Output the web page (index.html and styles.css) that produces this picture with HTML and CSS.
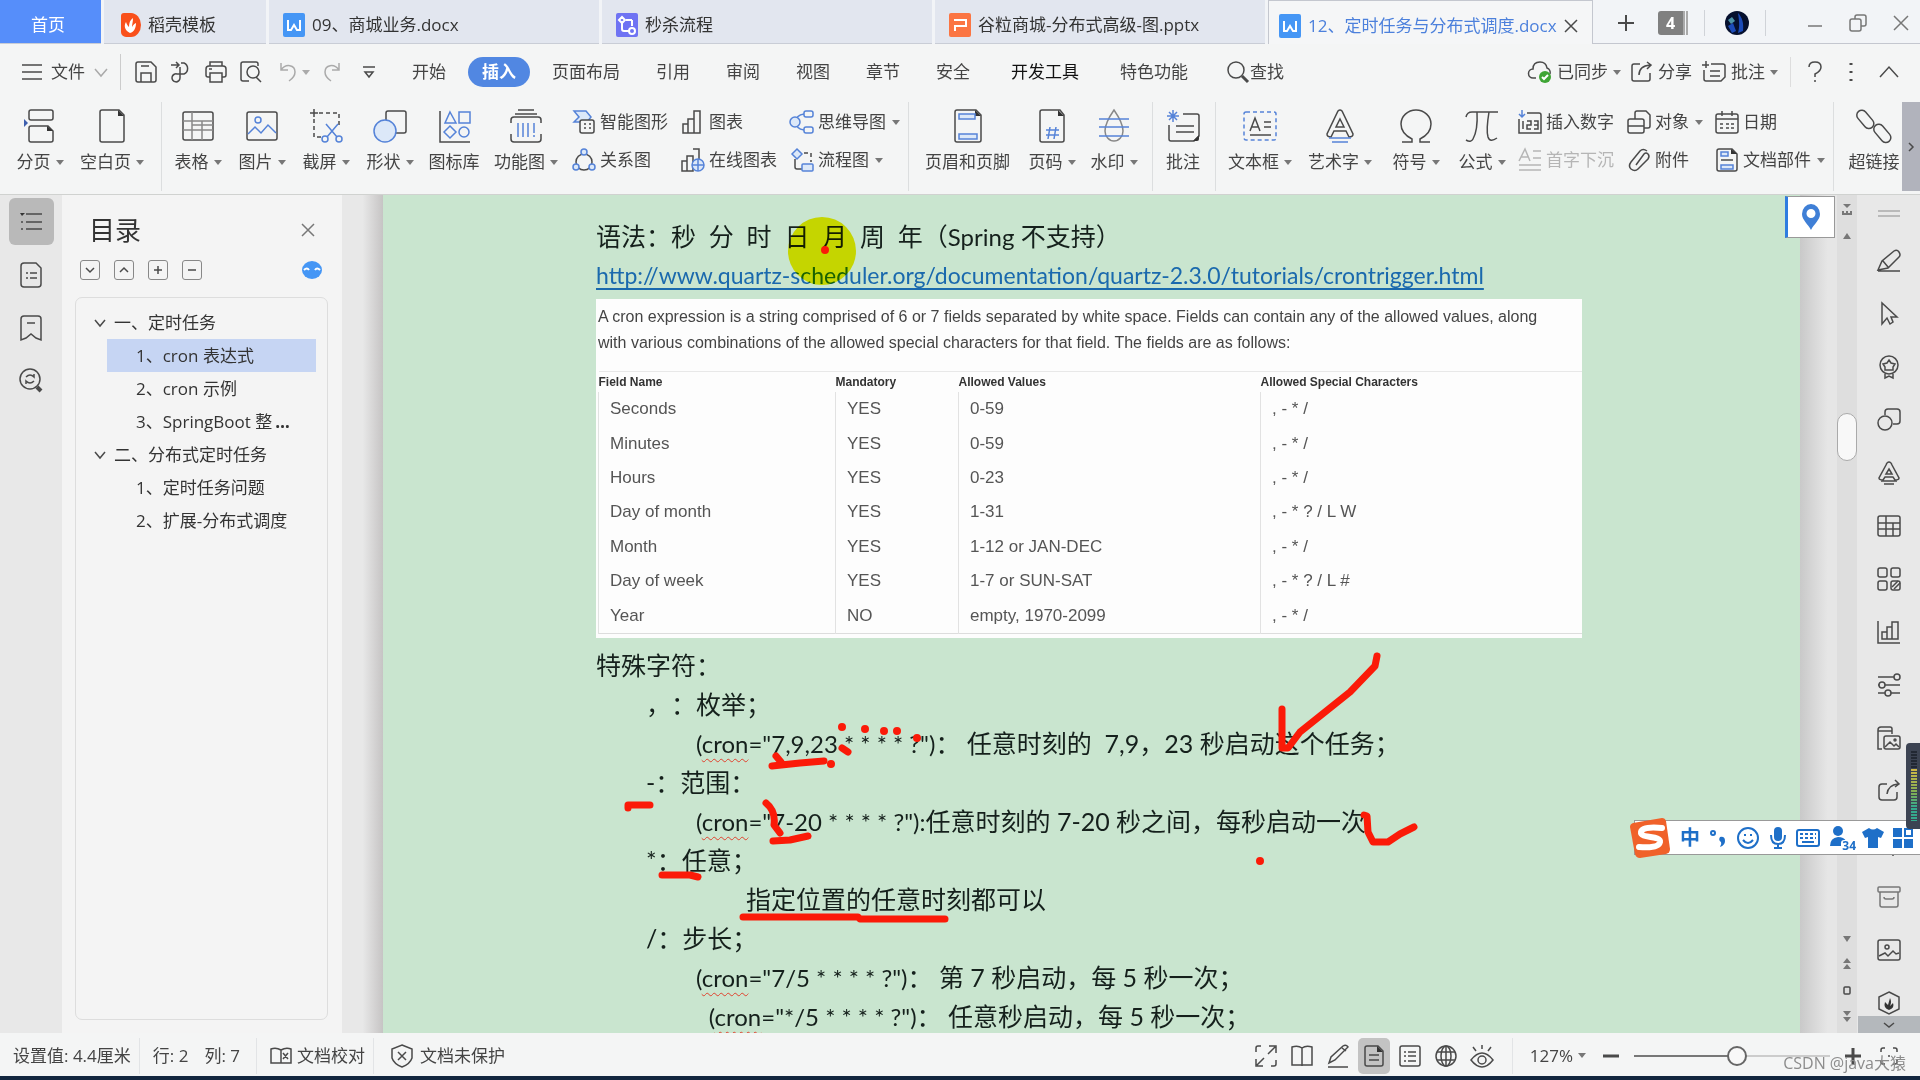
FILE: index.html
```html
<!DOCTYPE html>
<html lang="zh-CN">
<head>
    <meta charset="UTF-8">
    <meta name="viewport" content="width=device-width, initial-scale=1.0">
    <title>12、定时任务与分布式调度.docx</title>
    <link rel="stylesheet" href="styles.css">
</head>
<body>
    <!-- Document tabs -->
    <header class="tabs">
        <button class="tab tab-home">首页</button>
        <button class="tab tab-docer">
            <svg width="20" height="24" viewBox="0 0 20 24"><path class="f-orange" d="M3 0h7a10 12 0 0 1 0 24H5a5 5 0 0 1-5-5V3a3 3 0 0 1 3-3z"/><path class="f-white" d="M9 20C3 17 3 12 5 9c1 3 2 4 3 5 0-4 1-7 4-9 0 4-1 6-1 9 1-2 2-3 4-4 0 5-2 9-6 10z"/></svg>
            稻壳模板
        </button>
        <button class="tab tab-file">
            <svg width="22" height="24" viewBox="0 0 22 24"><rect class="f-blue" width="22" height="24" rx="2"/><path class="s-white" d="M5 7v10h3l3-5 3 5h3V7"/></svg>
            09、商城业务.docx
        </button>
        <button class="tab tab-file">
            <svg width="22" height="24" viewBox="0 0 22 24"><rect class="f-violet" width="22" height="24" rx="2"/><path class="s-white" d="M6 4l3 3-3 3-3-3zM6 10v6q0 2 2 2h5M10 7h6M16 7v6"/><circle class="s-white" cx="16" cy="18" r="3"/></svg>
            秒杀流程
        </button>
        <button class="tab tab-file">
            <svg width="22" height="24" viewBox="0 0 22 24"><rect class="f-coral" width="22" height="24" rx="2"/><path class="s-white" d="M5 7h12v6H6v5"/></svg>
            谷粒商城-分布式高级-图.pptx
        </button>
        <div class="tab tab-active">
            <svg width="22" height="24" viewBox="0 0 22 24"><rect class="f-blue" width="22" height="24" rx="2"/><path class="s-white" d="M5 7v10h3l3-5 3 5h3V7"/></svg>
            <span>12、定时任务与分布式调度.docx</span>
            <button class="plain" aria-label="关闭标签"><svg width="14" height="14" viewBox="0 0 14 14"><path d="M1 1l12 12M13 1L1 13"/></svg></button>
        </div>
        <div class="window-bar">
            <button class="plain" aria-label="新建"><svg width="18" height="18" viewBox="0 0 18 18"><path class="s-bold" d="M9 1v16M1 9h16"/></svg></button>
            <button class="tab-count">4</button>
            <span class="bar-line"></span>
            <button class="plain avatar" aria-label="账号"><svg width="24" height="24" viewBox="0 0 24 24"><circle class="f-navy" cx="12" cy="12" r="12"/><path class="f-royal" d="M13 2c4 4 6 10 5 18l-5 2c2-7 1-13 0-20zM3 15l5-3 3 8-4 2z"/><path class="f-teal" d="M3 9l4-3 3 4-4 3z"/></svg></button>
            <span class="bar-line"></span>
            <div class="window-buttons">
                <button class="plain" aria-label="最小化"><svg width="16" height="16" viewBox="0 0 16 16"><path d="M1 11h14"/></svg></button>
                <button class="plain" aria-label="还原"><svg width="18" height="18" viewBox="0 0 18 18"><rect x="1" y="5" width="11" height="12" rx="2"/><path d="M6 5V3q0-2 2-2h7q2 0 2 2v7q0 2-2 2h-3"/></svg></button>
                <button class="plain" aria-label="关闭"><svg width="16" height="16" viewBox="0 0 16 16"><path d="M1 1l14 14M15 1L1 15"/></svg></button>
            </div>
        </div>
    </header>

    <!-- Menu -->
    <nav class="menu">
        <button class="file-menu">
            <svg width="20" height="16" viewBox="0 0 20 16"><path d="M0 1h20M0 8h20M0 15h20"/></svg>
            文件
            <svg class="light" width="14" height="9" viewBox="0 0 14 9"><path d="M1 1l6 7 6-7"/></svg>
        </button>
        <div class="quick">
            <button class="plain" aria-label="保存"><svg width="22" height="22" viewBox="0 0 22 22"><path d="M1 3q0-2 2-2h13l5 5v13q0 2-2 2H3q-2 0-2-2zM6 21v-9h10v9M6 5h8"/></svg></button>
            <button class="plain" aria-label="输出为PDF"><svg width="22" height="22" viewBox="0 0 22 22"><path d="M1 4h8M6 1l3 3-3 3M11 2h3a6 6 0 0 1 0 11H7a4 4 0 1 0 3 4V6"/></svg></button>
            <button class="plain" aria-label="打印"><svg width="22" height="22" viewBox="0 0 22 22"><path d="M5 5V1h12v4M5 16H3q-2 0-2-2V8q0-3 3-3h14q3 0 3 3v6q0 2-2 2h-2M5 12h12v9H5zM4 8h3"/></svg></button>
            <button class="plain" aria-label="打印预览"><svg width="22" height="22" viewBox="0 0 22 22"><path d="M9 20H3q-2 0-2-2V3q0-2 2-2h13q2 0 2 2v2M16 16l5 5"/><circle cx="13" cy="11" r="6"/></svg></button>
            <button class="plain light undo" aria-label="撤销"><svg width="18" height="20" viewBox="0 0 18 20"><path d="M2 1v7h7M2 8C7 1 16 3 16 10q0 5-6 9"/></svg><i class="caret"></i></button>
            <button class="plain light" aria-label="恢复"><svg width="18" height="20" viewBox="0 0 18 20"><path d="M16 1v7H9M16 8C11 1 2 3 2 10q0 5 6 9"/></svg></button>
            <button class="plain customize" aria-label="自定义"><svg width="12" height="14" viewBox="0 0 12 14"><path d="M0 2h12M2 7l4 5 4-5z"/></svg></button>
        </div>
        <div class="menu-tabs">
            <button>开始</button>
            <button class="current">插入</button>
            <button>页面布局</button>
            <button>引用</button>
            <button>审阅</button>
            <button>视图</button>
            <button>章节</button>
            <button>安全</button>
            <button class="dark">开发工具</button>
            <button>特色功能</button>
        </div>
        <button class="find"><svg width="22" height="22" viewBox="0 0 22 22"><circle cx="9" cy="9" r="8"/><path class="s-bold" d="M15 15l6 6"/></svg>查找</button>
        <div class="menu-right">
            <button><svg width="24" height="22" viewBox="0 0 24 22"><path d="M8 17H5a4 4 0 0 1 0-9q0-7 7-7 6 0 7 6a5 5 0 0 1 3 6"/><circle class="f-green" cx="17" cy="16" r="6"/><path class="s-white" d="M14 16l2 2 4-4"/></svg>已同步<i class="caret"></i></button>
            <button><svg width="22" height="22" viewBox="0 0 22 22"><path d="M9 3H3q-2 0-2 2v13q0 2 2 2h14q2 0 2-2v-6M8 14q0-9 11-10M16 1l4 3-4 4"/></svg>分享</button>
            <button><svg width="24" height="22" viewBox="0 0 24 22"><path d="M9 3h12q2 0 2 2v11l-4 4H4q-2 0-2-2V9M0 4h7M4 0v7M8 10h10M8 15h10"/></svg>批注<i class="caret"></i></button>
        </div>
        <div class="menu-help">
            <button class="plain" aria-label="帮助"><svg width="16" height="22" viewBox="0 0 16 22"><path d="M2 6q0-5 6-5t6 5q0 4-6 7v3M8 19v2"/></svg></button>
            <button class="plain" aria-label="更多"><svg width="4" height="20" viewBox="0 0 4 20"><path class="s-bold" d="M2 1v2M2 9v2M2 17v2"/></svg></button>
            <button class="plain" aria-label="收起功能区"><svg width="20" height="12" viewBox="0 0 20 12"><path d="M1 11l9-10 9 10"/></svg></button>
        </div>
    </nav>

    <!-- Ribbon -->
    <section class="ribbon">
        <div class="group">
            <button class="tool w72"><svg width="34" height="34" viewBox="0 0 34 34"><rect x="6" y="1" width="24" height="10" rx="2"/><path d="M25 17H8q-2 0-2 2v12q0 2 2 2h20q2 0 2-2v-9z"/><path class="f-dark" d="M24 17v5h6z"/><path class="f-ink" d="M1 10l4 4-4 4z"/></svg><span>分页<i class="caret"></i></span></button>
            <button class="tool w72"><svg width="34" height="34" viewBox="0 0 34 34"><path d="M24 1H7q-2 0-2 2v28q0 2 2 2h20q2 0 2-2V6z"/><path class="f-dark" d="M23 1v6h6z"/></svg><span>空白页<i class="caret"></i></span></button>
        </div>
        <div class="group">
            <button class="tool w64"><svg width="34" height="34" viewBox="0 0 34 34"><rect x="2" y="3" width="30" height="28" rx="2"/><path class="thin" d="M2 12h30M2 21h30M11 3v28M21 12v19M11 16h21"/></svg><span>表格<i class="caret"></i></span></button>
            <button class="tool w64"><svg width="34" height="34" viewBox="0 0 34 34"><rect x="2" y="3" width="30" height="28" rx="2"/><path class="s-blue" d="M3 25l7-7 6 6 7-8 8 8"/><circle class="s-blue" cx="13" cy="11" r="3"/></svg><span>图片<i class="caret"></i></span></button>
            <button class="tool w64"><svg width="34" height="34" viewBox="0 0 34 34"><path d="M1 4h8M5 0v8"/><path class="dash" d="M10 4h20v14M5 10v18h8"/><path class="s-blue" d="M17 15l11 13M29 15L18 28"/><circle class="s-blue" cx="16" cy="30" r="3"/><circle class="s-blue" cx="30" cy="30" r="3"/></svg><span>截屏<i class="caret"></i></span></button>
            <button class="tool w64"><svg width="34" height="34" viewBox="0 0 34 34"><rect x="13" y="2" width="20" height="22" rx="2"/><ellipse class="s-blue f-pale" cx="12" cy="22" rx="11" ry="11"/></svg><span>形状<i class="caret"></i></span></button>
            <button class="tool w64"><svg width="34" height="34" viewBox="0 0 34 34"><path d="M3 2v31h30"/><path class="s-blue" d="M13 3l6 11H8zM22 3h11v11H22zM13 17l6 6-6 6-6-6z"/><circle class="s-blue" cx="27" cy="23" r="5"/></svg><span>图标库</span></button>
            <button class="tool w80"><svg width="34" height="34" viewBox="0 0 34 34"><path d="M9 1h16M6 5h22M2 14v-3q0-3 3-3h24q3 0 3 3v3M2 25v5q0 3 3 3h24q3 0 3-3v-5"/><path class="s-blue" d="M9 14v14M14 14v14M19 14v14M25 14v10M25 26v2"/></svg><span>功能图<i class="caret"></i></span></button>
            <div class="stack w109">
                <button><svg width="24" height="24" viewBox="0 0 24 24"><path class="s-blue f-pale" d="M2 1h12l5 6-4 5H2l5-5z"/><rect class="f-bg" x="8" y="10" width="14" height="13" rx="2"/><path d="M12 14h2M17 14h2M12 18h2M17 18h2"/></svg>智能图形</button>
                <button><svg width="24" height="24" viewBox="0 0 24 24"><circle cx="12" cy="14" r="8"/><circle class="s-blue f-pale" cx="12" cy="4" r="3"/><circle class="s-blue f-pale" cx="4" cy="19" r="3"/><circle class="s-blue f-pale" cx="20" cy="19" r="3"/></svg>关系图</button>
            </div>
            <div class="stack w109">
                <button><svg width="24" height="24" viewBox="0 0 24 24"><path d="M2 14h5v9H2zM7 9h6v14H7zM13 1h6v22h-6z"/></svg>图表</button>
                <button><svg width="24" height="24" viewBox="0 0 24 24"><path d="M1 13h5v10H1zM6 8h6v15H6zM12 1h6v10"/><circle class="s-blue f-pale" cx="17" cy="17" r="6"/><path class="s-blue" d="M11 17h12M17 11v12"/></svg>在线图表</button>
            </div>
            <div class="stack w118">
                <button><svg width="24" height="24" viewBox="0 0 24 24"><path class="s-blue" d="M14 4q-8 1-8 8t8 8"/><circle class="s-blue f-pale" cx="5" cy="12" r="5"/><rect class="s-blue" x="14" y="1" width="9" height="6" rx="2"/><rect class="s-blue" x="14" y="17" width="9" height="6" rx="2"/></svg>思维导图<i class="caret"></i></button>
                <button><svg width="24" height="24" viewBox="0 0 24 24"><path class="s-blue f-pale" d="M7 1l5 5-5 5-5-5z"/><path d="M5 11v8q0 2 2 2h5"/><path class="dash" d="M14 5h7v9"/><rect class="s-blue f-pale" x="12" y="16" width="11" height="7" rx="1"/></svg>流程图<i class="caret"></i></button>
            </div>
        </div>
        <div class="group">
            <button class="tool w109"><svg width="34" height="34" viewBox="0 0 34 34"><path d="M25 1H6q-2 0-2 2v28q0 2 2 2h22q2 0 2-2V6z"/><path class="f-dark" d="M24 1v6h6z"/><path class="s-blue f-pale" d="M8 5h16v5H8zM8 25h18v5H8z"/></svg><span>页眉和页脚</span></button>
            <button class="tool w60"><svg width="34" height="34" viewBox="0 0 34 34"><path d="M25 1H7q-2 0-2 2v28q0 2 2 2h20q2 0 2-2V6z"/><path class="f-dark" d="M23 1v6h6z"/><path class="s-blue" d="M11 21h13M11 26h13M15 18l-2 12M21 18l-2 12"/></svg><span>页码<i class="caret"></i></span></button>
            <button class="tool w64"><svg width="34" height="34" viewBox="0 0 34 34"><path class="thin" d="M17 1Q8 14 8 22a9 10 0 0 0 18 0q0-8-9-21z"/><path class="s-blue" d="M2 10h30M2 18h30M2 27h30"/></svg><span>水印<i class="caret"></i></span></button>
        </div>
        <div class="group">
            <button class="tool w52"><svg width="34" height="34" viewBox="0 0 34 34"><path d="M17 5h14q2 0 2 2v20l-5 5H5q-2 0-2-2V16M10 17h18M10 23h18"/><path class="f-dark" d="M33 26v4q0 2-2 2h-4z"/><path class="s-blue" d="M7 1v12M1 7h12M3 3l8 8M11 3l-8 8"/></svg><span>批注</span></button>
        </div>
        <div class="group">
            <button class="tool w80"><svg width="34" height="34" viewBox="0 0 34 34"><rect class="s-blue dash" x="1" y="3" width="32" height="28" rx="2"/><path d="M7 22l5-13 5 13M9 18h6M21 13h7M21 18h7M7 26h21"/></svg><span>文本框<i class="caret"></i></span></button>
            <button class="tool w80"><svg width="34" height="34" viewBox="0 0 34 34"><path d="M15 2q2-2 4 0l11 23q0 3-4 3l-3-6H11l-3 6q-4 0-4-3z"/><path d="M17 10l4 8h-8z"/><path class="s-blue" d="M6 29h22M9 33h16"/></svg><span>艺术字<i class="caret"></i></span></button>
            <button class="tool w72"><svg width="34" height="34" viewBox="0 0 34 34"><path d="M3 33h10v-3C5 26 2 21 2 15a15 14 0 0 1 30 0c0 6-3 11-11 15v3h10"/></svg><span>符号<i class="caret"></i></span></button>
            <button class="tool w60"><svg width="34" height="34" viewBox="0 0 34 34"><path d="M1 8q1-5 6-5h26M12 3q1 18-4 27-2 4-7 1M24 3q-3 18-1 25 2 6 9 1"/></svg><span>公式<i class="caret"></i></span></button>
            <div class="stack w109">
                <button><svg width="24" height="24" viewBox="0 0 24 24"><path d="M9 3h12q2 0 2 2v18H1V9M5 11v8M9 11h4v4H9v4h4M16 11h4v8h-4M16 15h4"/><path class="s-blue" d="M4 0v7M1 4l3 3 3-3"/></svg>插入数字</button>
                <button class="off" disabled><svg width="24" height="24" viewBox="0 0 24 24"><path d="M1 13L7 1l5 12M3 9h7M15 3h8M15 10h8M1 17h22M1 22h22"/></svg>首字下沉</button>
            </div>
            <div class="stack w88">
                <button><svg width="24" height="24" viewBox="0 0 24 24"><path d="M8 9V3q0-2 2-2h9l4 4v11q0 2-2 2h-4"/><rect x="1" y="9" width="16" height="14" rx="2"/><path d="M1 16h16"/></svg>对象<i class="caret"></i></button>
                <button><svg width="24" height="24" viewBox="0 0 24 24"><path d="M9 17l8-11q2-2 4 0t0 5L11 21q-3 3-7 0-3-3 0-7L13 3q3-3 7 0"/></svg>附件</button>
            </div>
            <div class="stack w118">
                <button><svg width="24" height="24" viewBox="0 0 24 24"><rect x="1" y="4" width="22" height="19" rx="2"/><path d="M1 9h22M7 1v5M17 1v5M5 14h3M11 14h3M16 14h3M5 18h3M11 18h3M16 18h3"/></svg>日期</button>
                <button><svg width="24" height="24" viewBox="0 0 24 24"><path d="M17 1H4q-2 0-2 2v18q0 2 2 2h16q2 0 2-2V6z"/><path class="f-dark" d="M16 1v5h6z"/><path class="s-blue f-pale" d="M6 4h7v4H6zM6 17h12v4H6z"/><path d="M6 12h12"/></svg>文档部件<i class="caret"></i></button>
            </div>
        </div>
        <div class="group group-cut">
            <button class="tool w72"><svg width="34" height="34" viewBox="0 0 34 34"><rect x="-2" y="5" width="21" height="10" rx="5" transform="rotate(50 8 10)"/><rect x="15" y="19" width="21" height="10" rx="5" transform="rotate(50 25 24)"/></svg><span>超链接</span></button>
        </div>
        <button class="ribbon-next" aria-label="向右滚动"><svg width="6" height="10" viewBox="0 0 6 10"><path d="M1 1l4 4-4 4"/></svg></button>
    </section>

    <main class="work">
        <aside class="rail-left">
            <button class="on" aria-label="目录"><svg width="24" height="22" viewBox="0 0 24 22"><path d="M7 3h16M2 11h2M7 11h16M2 18h2M7 18h16"/><path class="f-dark" d="M1 2h5L3 5z"/></svg></button>
            <button aria-label="章节"><svg width="22" height="26" viewBox="0 0 22 26"><path d="M16 1H4Q1 1 1 4v18q0 3 3 3h14q3 0 3-3V6zM6 11h2M10 11h7M6 16h2M10 16h7"/></svg></button>
            <button aria-label="书签"><svg width="22" height="26" viewBox="0 0 22 26"><path d="M1 25V4q0-3 3-3h14q3 0 3 3v21l-5-2-5-4-5 4zM7 8h8"/></svg></button>
            <button aria-label="查找和替换"><svg width="24" height="26" viewBox="0 0 24 26"><circle cx="11" cy="11" r="10"/><path d="M7 9q4-4 8 0v-3M15 13q-4 4-8 0v3"/><path class="s-thick" d="M18 19l4 4"/></svg></button>
        </aside>

        <aside class="outline">
            <div class="outline-head">
                <h2>目录</h2>
                <button class="plain" aria-label="关闭目录"><svg width="14" height="14" viewBox="0 0 14 14"><path d="M1 1l12 12M13 1L1 13"/></svg></button>
            </div>
            <div class="outline-tools">
                <button aria-label="展开"><svg width="10" height="6" viewBox="0 0 10 6"><path d="M1 1l4 4 4-4"/></svg></button>
                <button aria-label="收起"><svg width="10" height="6" viewBox="0 0 10 6"><path d="M1 5l4-4 4 4"/></svg></button>
                <button aria-label="增加级别"><svg width="10" height="10" viewBox="0 0 10 10"><path d="M5 1v8M1 5h8"/></svg></button>
                <button aria-label="降低级别"><svg width="10" height="10" viewBox="0 0 10 10"><path d="M1 5h8"/></svg></button>
                <button class="bot" aria-label="智能识别"><svg width="20" height="18" viewBox="0 0 20 18"><ellipse class="f-blue" cx="10" cy="9" rx="10" ry="9"/><path class="s-white" d="M2 9q3-3 5 0M13 9q2-3 5 0"/></svg></button>
            </div>
            <ul class="tree">
                <li><a href="#s1"><svg width="12" height="8" viewBox="0 0 12 8"><path d="M1 1l5 6 5-6"/></svg>一、定时任务</a>
                    <ul>
                        <li><a class="picked" href="#s11">1、cron 表达式</a></li>
                        <li><a href="#s12">2、cron 示例</a></li>
                        <li><a href="#s13">3、SpringBoot 整<b>…</b></a></li>
                    </ul>
                </li>
                <li><a href="#s2"><svg width="12" height="8" viewBox="0 0 12 8"><path d="M1 1l5 6 5-6"/></svg>二、分布式定时任务</a>
                    <ul>
                        <li><a href="#s21">1、定时任务问题</a></li>
                        <li><a href="#s22">2、扩展-分布式调度</a></li>
                    </ul>
                </li>
            </ul>
        </aside>

        <div class="gutter-left"></div>

        <article class="paper" id="s11">
            <p>语法：秒  分  时  日  月  周  年（<span>Spring</span> 不支持）</p>
            <p class="url"><a href="http://www.quartz-scheduler.org/documentation/quartz-2.3.0/tutorials/crontrigger.html">http://www.quartz-scheduler.org/documentation/quartz-2.3.0/tutorials/crontrigger.html</a></p>
            <div class="figure">
                <p>A cron expression is a string comprised of 6 or 7 fields separated by white space. Fields can contain any of the allowed values, along<br>with various combinations of the allowed special characters for that field. The fields are as follows:</p>
                <table>
                    <thead>
                        <tr><th class="c1">Field Name</th><th class="c2">Mandatory</th><th class="c3">Allowed Values</th><th>Allowed Special Characters</th></tr>
                    </thead>
                    <tbody>
                        <tr><td>Seconds</td><td>YES</td><td>0-59</td><td>, - * /</td></tr>
                        <tr><td>Minutes</td><td>YES</td><td>0-59</td><td>, - * /</td></tr>
                        <tr><td>Hours</td><td>YES</td><td>0-23</td><td>, - * /</td></tr>
                        <tr><td>Day of month</td><td>YES</td><td>1-31</td><td>, - * ? / L W</td></tr>
                        <tr><td>Month</td><td>YES</td><td>1-12 or JAN-DEC</td><td>, - * /</td></tr>
                        <tr><td>Day of week</td><td>YES</td><td>1-7 or SUN-SAT</td><td>, - * ? / L #</td></tr>
                        <tr><td>Year</td><td>NO</td><td>empty, 1970-2099</td><td>, - * /</td></tr>
                    </tbody>
                </table>
            </div>
            <p>特殊字符：</p>
            <p class="in2">，：枚举；</p>
            <p class="in4"><code>(<u>cron</u>="7,9,23 * * * * ?")</code>： 任意时刻的  7,9，23 秒启动这个任务；</p>
            <p class="in2">-：范围：</p>
            <p class="in4"><code>(<u>cron</u>="7-20 * * * * ?"):</code>任意时刻的 7-20 秒之间，每秒启动一次</p>
            <p class="in2">*：任意；</p>
            <p class="in6">指定位置的任意时刻都可以</p>
            <p class="in2">/：步长；</p>
            <p class="in4"><code>(<u>cron</u>="7/5 * * * * ?")</code>： 第 7 秒启动，每 5 秒一次；</p>
            <p class="in4">  <code>(<u>cron</u>="*/5 * * * * ?")</code>： 任意秒启动，每 5 秒一次；</p>

            <!-- Mouse highlight and pen marks drawn over the text -->
            <span class="spot"></span>
            <svg class="ink" width="1417" height="838" viewBox="383 195 1417 838">
                <path class="dots" d="M825 250h0M842 727h0M865 729h0M884 731h0M897 731h0M917 738h0M831 764h0M1260 861h0"/>
                <path d="M842 748l6 4M776 756l5 6M772 766l28-3 24-2M628 808v-3h22M766 803q10 8 8 22l6 8M773 841l17-1 18-4M662 875h28l8 2M743 917h115l2 2h85"/>
                <path d="M1282 709v39h6l12-16 25-20 25-20 25-26 2-10M1364 815l3 1 1 16 5 10h15l12-8 14-7"/>
            </svg>
        </article>

        <div class="gutter-right"></div>
        <button class="pin" aria-label="定位"><svg width="20" height="28" viewBox="0 0 20 28"><path class="f-pin" fill-rule="evenodd" d="M10 1a9 10 0 0 1 9 10c0 6-6 10-9 16C7 21 1 17 1 11a9 10 0 0 1 9-10zm0 5a4 4 0 1 0 0 9 4 4 0 0 0 0-9z"/></svg></button>

        <div class="scroll">
            <svg width="12" height="14" viewBox="0 0 12 14"><path class="f-gray" d="M2 1h8L6 5zM1 8h2v2h2V8h2v2h2V8h2v4H1z"/></svg>
            <button class="plain" aria-label="向上"><svg width="8" height="6" viewBox="0 0 8 6"><path class="f-gray" d="M4 0l4 6H0z"/></svg></button>
            <div class="track"><div class="thumb"></div></div>
            <button class="plain" aria-label="向下"><svg width="8" height="6" viewBox="0 0 8 6"><path class="f-gray" d="M0 0h8L4 6z"/></svg></button>
            <button class="plain" aria-label="上一页"><svg width="8" height="12" viewBox="0 0 8 12"><path class="f-gray" d="M4 0l4 5H0zM4 6l4 5H0z"/></svg></button>
            <button class="plain" aria-label="选择浏览对象"><svg width="8" height="9" viewBox="0 0 8 9"><rect x="1" y="1" width="6" height="7" rx="1"/></svg></button>
            <button class="plain" aria-label="下一页"><svg width="8" height="12" viewBox="0 0 8 12"><path class="f-gray" d="M0 0h8L4 5zM0 6h8l-4 5z"/></svg></button>
        </div>

        <aside class="rail-right">
            <svg class="handle" width="22" height="8" viewBox="0 0 22 8"><path d="M0 2h22M0 7h22"/></svg>
            <button aria-label="画笔"><svg width="24" height="24" viewBox="0 0 24 24"><path d="M1 22h22M1 21l4-9L17 2q3-2 5 1t0 5L11 19zM6 12l5 6"/></svg></button>
            <button aria-label="选择"><svg width="24" height="24" viewBox="0 0 24 24"><path d="M5 1v21l5-6 3 6 3-2-2-5h6z"/></svg></button>
            <button aria-label="徽章"><svg width="24" height="24" viewBox="0 0 24 24"><circle cx="12" cy="10" r="9"/><path d="M12 5l2 3 4 1-2 3v3h-8v-3L6 9l4-1zM8 19v4l4-2 4 2v-4"/></svg></button>
            <button aria-label="形状"><svg width="24" height="24" viewBox="0 0 24 24"><circle cx="8" cy="15" r="7"/><path d="M8 7V4q0-3 3-3h9q3 0 3 3v9q0 3-3 3h-4"/></svg></button>
            <button aria-label="艺术字"><svg width="24" height="24" viewBox="0 0 24 24"><path d="M12 1q2 0 3 3l7 13q0 2-4 2l-2-3H8l-2 3q-4 0-4-2L9 4q1-3 3-3zM12 8l3 5H9zM4 20h16M7 23h10"/></svg></button>
            <button aria-label="表格"><svg width="24" height="24" viewBox="0 0 24 24"><rect x="1" y="2" width="22" height="20" rx="2"/><path d="M1 9h22M1 15h22M9 2v20M16 9v13"/></svg></button>
            <button aria-label="图标库"><svg width="24" height="24" viewBox="0 0 24 24"><rect x="1" y="1" width="9" height="9" rx="2"/><rect x="14" y="1" width="9" height="9" rx="2"/><rect x="1" y="14" width="9" height="9" rx="2"/><rect x="14" y="14" width="9" height="9" rx="2"/><path d="M15 20l6-6M17 22l6-6"/></svg></button>
            <button aria-label="图表"><svg width="24" height="24" viewBox="0 0 24 24"><path d="M1 1v22h22M5 19v-7h5v7zM10 19V7h5v12zM15 19V2h6v17z"/></svg></button>
            <button aria-label="设置"><svg width="24" height="24" viewBox="0 0 24 24"><path d="M1 4h16M1 12h1M8 12h15M1 20h7M14 20h9"/><circle cx="20" cy="4" r="3"/><circle cx="5" cy="12" r="3"/><circle cx="11" cy="20" r="3"/></svg></button>
            <button aria-label="图片库"><svg width="24" height="24" viewBox="0 0 24 24"><path d="M5 23H1V4q0-3 3-3h9q2 0 2 2v5M1 5h14"/><rect x="7" y="10" width="16" height="13" rx="2"/><path d="M8 21l5-5 4 4 2-2 3 3"/><circle cx="18" cy="14" r="1"/></svg></button>
            <button aria-label="分享"><svg width="24" height="24" viewBox="0 0 24 24"><path d="M10 5H5q-3 0-3 3v10q0 3 3 3h12q3 0 3-3v-5M10 15q1-9 11-10M18 1l4 4-4 3"/></svg></button>
            <button aria-label="工具"><svg width="24" height="24" viewBox="0 0 24 24"><path d="M4 4h16v12H4zM16 16v8"/></svg></button>
            <button class="soft" aria-label="归档"><svg width="24" height="24" viewBox="0 0 24 24"><rect x="1" y="2" width="22" height="5" rx="1"/><path d="M3 7v13q0 2 2 2h14q2 0 2-2V7M7 12q0 2 2 2h6q2 0 2-2"/></svg></button>
            <button aria-label="图片"><svg width="24" height="24" viewBox="0 0 24 24"><rect x="1" y="2" width="22" height="20" rx="2"/><path d="M2 18l6-3 3 3 5-5 3 3 3-1"/><circle cx="10" cy="9" r="2"/></svg></button>
            <button aria-label="稻壳"><svg width="24" height="24" viewBox="0 0 24 24"><path d="M12 1l10 5v12l-10 5-10-5V6z"/><path class="f-dark" d="M12 19q-6-2-4-8l3 3 2-7q2 4 0 8l3-3q2 5-4 7z"/></svg></button>
            <button class="rail-more" aria-label="更多工具"><svg width="12" height="6" viewBox="0 0 12 6"><path d="M1 1l5 4 5-4"/></svg></button>
        </aside>
    </main>

    <!-- Status bar -->
    <footer class="status">
        <span class="cell">设置值: 4.4厘米</span>
        <span class="cell cell-pos"><span>行: 2</span><span>列: 7</span></span>
        <button class="cell"><svg width="22" height="18" viewBox="0 0 22 18"><path d="M11 3q-5-3-10-1v14h10M11 3q5-3 10-1v14H11V3M13 6l5 6M18 6l-5 6"/></svg>文档校对</button>
        <button class="cell cell-guard"><svg width="22" height="24" viewBox="0 0 22 24"><path d="M11 1l10 4v9q-2 6-10 9Q3 20 1 14V5zM7 8l8 8M15 8l-8 8"/></svg>文档未保护</button>
        <div class="views">
            <button aria-label="全屏"><svg width="22" height="22" viewBox="0 0 22 22"><path d="M1 7V3q0-2 2-2h3M14 1h7v7M20 2l-7 7M1 14v7h7M2 20l7-7M21 15v4q0 2-2 2h-3"/></svg></button>
            <button aria-label="阅读版式"><svg width="22" height="22" viewBox="0 0 22 22"><path d="M11 3q-4-3-10-1v18h20V2q-6-2-10 1v18"/></svg></button>
            <button aria-label="写作模式"><svg width="22" height="24" viewBox="0 0 22 24"><path d="M1 23h20M2 19l2-6L16 2q3-2 5 1L8 16zM15 4l4 3"/></svg></button>
            <button class="on" aria-label="页面视图"><svg width="20" height="22" viewBox="0 0 20 22"><path d="M14 1H3Q1 1 1 3v16q0 2 2 2h14q2 0 2-2V6zM5 10h10M5 15h10"/><path class="f-dark" d="M13 1v6h6z"/></svg></button>
            <button aria-label="大纲"><svg width="22" height="22" viewBox="0 0 22 22"><rect x="1" y="1" width="20" height="20" rx="2"/><path d="M5 7h2M9 7h8M5 11h2M9 11h8M5 16h2M9 16h8"/></svg></button>
            <button aria-label="Web版式"><svg width="22" height="22" viewBox="0 0 22 22"><circle cx="11" cy="11" r="10"/><ellipse cx="11" cy="11" rx="5" ry="10"/><path d="M11 1v20M2 7h18M2 15h18"/></svg></button>
            <button aria-label="护眼模式"><svg width="24" height="24" viewBox="0 0 24 24"><path d="M1 16q11-14 22 0-11 14-22 0zM12 1v4M3 3l3 4M21 3l-3 4"/><circle cx="12" cy="16" r="4"/></svg></button>
        </div>
        <div class="zoom">
            <button class="percent">127%<i class="caret"></i></button>
            <button class="plain" aria-label="缩小"><svg width="18" height="18" viewBox="0 0 18 18"><path class="s-bold" d="M1 9h16"/></svg></button>
            <input type="range" min="0" max="100" value="53" aria-label="缩放">
            <button class="plain" aria-label="放大"><svg width="18" height="18" viewBox="0 0 18 18"><path class="s-bold" d="M9 1v16M1 9h16"/></svg></button>
            <button class="plain fit" aria-label="最佳显示比例"><svg width="18" height="18" viewBox="0 0 18 18"><path d="M1 5V3q0-2 2-2h2M13 1h2q2 0 2 2v2M17 13v2q0 2-2 2h-2M5 17H3q-2 0-2-2v-2M8 9h2"/></svg></button>
        </div>
    </footer>

    <!-- Floating input method bar -->
    <div class="ime">
        <svg class="ime-logo" width="42" height="42" viewBox="0 0 42 42"><path class="f-sogou" d="M4 6L33 1q3 0 4 3l4 28q0 4-4 5L11 41q-4 0-5-4L1 10q0-3 3-4z"/><path class="s-logo" d="M33 11q-20-2-21 4c-1 7 20 3 19 10-1 5-10 6-21 5"/></svg>
        <button class="ime-zh">中</button>
        <button aria-label="标点"><svg width="18" height="20" viewBox="0 0 18 20"><circle class="s-ime" cx="4" cy="5" r="2"/><path class="f-ime" d="M11 9q5-1 5 4 0 4-5 6 2-3 1-5-3-2-1-5z"/></svg></button>
        <button aria-label="表情"><svg width="24" height="24" viewBox="0 0 24 24"><circle class="s-ime" cx="12" cy="12" r="10"/><path class="s-ime" d="M9 8v2M15 8v2M7 14q5 6 10 0"/></svg></button>
        <button aria-label="语音"><svg width="18" height="24" viewBox="0 0 18 24"><rect class="f-ime" x="5" y="1" width="8" height="14" rx="4"/><path class="s-ime" d="M2 9q0 9 7 9t7-9M9 18v4M5 22h8"/></svg></button>
        <button aria-label="键盘"><svg width="24" height="18" viewBox="0 0 24 18"><rect class="s-ime" x="1" y="1" width="22" height="16" rx="2"/><path class="s-ime keys" d="M4 5h16M4 9h16"/><path class="s-ime" d="M6 13h12"/></svg></button>
        <button class="ime-user" aria-label="用户"><svg width="24" height="24" viewBox="0 0 24 24"><circle class="f-ime" cx="9" cy="5" r="5"/><path class="f-ime" d="M1 20q0-8 8-9 6 0 8 4v5z"/></svg><b>34</b></button>
        <button aria-label="皮肤"><svg width="22" height="22" viewBox="0 0 22 22"><path class="f-ime" d="M7 1q4 3 8 0l7 4-3 6-3-1v11H6V10l-3 1-3-6z"/></svg></button>
        <button aria-label="工具箱"><svg width="20" height="22" viewBox="0 0 20 22"><path class="f-ime" d="M0 1h9v9H0zM0 12h9v9H0zM11 12h9v9h-9z"/><rect class="s-ime" x="12" y="2" width="7" height="7"/></svg></button>
    </div>
    <div class="meter"><span></span></div>
    <div class="credit">CSDN @java大猿</div>
</body>
</html>
```
FILE: styles.css
```css
* {
    box-sizing: border-box;
}
body {
    margin: 0;
    height: 100vh;
    display: flex;
    flex-direction: column;
    overflow: hidden;
    border-bottom: 4px solid #13263f;
    background-color: #f4f5f5;
    color: #444;
    font-family: "Open Sans", "Noto Sans CJK SC", sans-serif;
    font-size: 17px;
    line-height: 24px;
}
button {
    display: inline-flex;
    align-items: center;
    justify-content: center;
    flex: none;
    border: none;
    padding: 0;
    background: none;
    color: inherit;
    font: inherit;
    white-space: nowrap;
    cursor: pointer;
}
svg {
    flex: none;
    fill: none;
    stroke: #4a4a4a;
    stroke-width: 1.5;
    overflow: visible;
}
.caret {
    width: 0;
    height: 0;
    margin-left: 5px;
    border: 4px solid transparent;
    border-top: 5px solid #777;
    border-bottom: none;
}

/* icon paints */
.s-white { stroke: #fff; stroke-width: 2; }
.s-bold { stroke-width: 3; }
.s-thick { stroke-width: 4; }
.s-blue { stroke: #5583d8; }
.s-ime { stroke: #1e6fc8; stroke-width: 2; }
.s-logo { stroke: #fff; stroke-width: 6; stroke-linecap: round; }
.thin { stroke: #888; }
.dash { stroke-dasharray: 4 3; }
.keys { stroke-dasharray: 3 2; }
.f-orange { fill: #f9501b; stroke: none; }
.f-white { fill: #fff; stroke: none; }
.f-blue { fill: #4596f5; stroke: none; }
.f-violet { fill: #6f73f3; stroke: none; }
.f-coral { fill: #fb7543; stroke: none; }
.f-navy { fill: #06102e; stroke: none; }
.f-royal { fill: #1c4bb8; stroke: none; }
.f-teal { fill: #4d93a8; stroke: none; }
.f-green { fill: #3fa535; stroke: none; }
.f-dark { fill: #333; stroke: none; }
.f-ink { fill: #3d5fae; stroke: none; }
.f-pale { fill: #dce8f8; }
.f-bg { fill: #f4f5f5; }
.f-pin { fill: #3f7fd6; stroke: none; }
.f-gray { fill: #777; stroke: none; }
.f-ime { fill: #1e6fc8; stroke: none; }
.f-sogou { fill: #f0612a; stroke: none; }

/* tabs */
.tabs {
    display: flex;
    flex: none;
    gap: 3px;
    height: 44px;
    background-color: #f2f4f7;
}
.tab {
    display: flex;
    align-items: center;
    justify-content: flex-start;
    gap: 7px;
    height: 44px;
    padding: 6px 14px 0;
    border-bottom: 1px solid #c9cdd6;
    background-color: #e2e6ef;
    color: #333;
}
.tab-home {
    width: 101px;
    justify-content: center;
    padding-right: 19px;
    background-color: #568efa;
    color: #fff;
}
.tab-docer {
    width: 162px;
    padding-left: 17px;
}
.tab-file {
    width: 330px;
    flex: 0 1 auto;
}
.tab-active {
    width: 325px;
    padding: 6px 10px 0;
    border: 1px solid #c4c7cf;
    border-bottom: none;
    background-color: #f5f6f7;
    color: #4c80dc;
    white-space: nowrap;
}
.window-bar {
    display: flex;
    flex: 1;
    align-items: center;
    gap: 20px;
    padding: 2px 11px 0 24px;
    margin-left: -3px;
    border-bottom: 1px solid #c4c7cf;
}
.window-bar .s-bold {
    stroke-width: 2;
}
.tab-count {
    width: 30px;
    height: 24px;
    border-right: 5px double #aaa;
    border-radius: 3px 0 0 3px;
    margin-left: 3px;
    background-color: #808080;
    background-clip: padding-box;
    color: #fff;
    font-size: 16px;
    font-weight: bold;
}
.bar-line {
    width: 1px;
    height: 26px;
    background-color: #d0d3d8;
    margin-left: -4px;
}
.window-buttons {
    display: flex;
    flex: 1;
    align-items: center;
    justify-content: flex-end;
    gap: 26px;
}
.window-buttons svg {
    stroke: #777;
}

/* menu */
.menu {
    display: flex;
    flex: none;
    align-items: center;
    height: 56px;
    padding-right: 21px;
}
.file-menu {
    gap: 9px;
    height: 36px;
    padding: 0 12px 0 22px;
    border-right: 1px solid #ccc;
}
.quick {
    display: flex;
    align-items: center;
    gap: 13px;
    padding-left: 14px;
}
.quick .undo {
    margin-left: 4px;
}
.quick .customize {
    margin-left: 9px;
}
.light svg, svg.light {
    stroke: #aaa;
}
.light .caret {
    border-top-color: #aaa;
}
.menu-tabs {
    display: flex;
    align-items: center;
    padding-left: 19px;
}
.menu-tabs button {
    height: 30px;
    padding: 0 18px;
}
.menu-tabs .current {
    padding: 0 14px;
    margin: 0 4px;
    border-radius: 15px;
    background-color: #5187e2;
    color: #fff;
    font-weight: bold;
}
.menu-tabs .dark {
    padding: 0 23px;
    color: #111;
}
.find {
    gap: 1px;
    margin-left: 21px;
}
.menu-right {
    display: flex;
    gap: 10px;
    margin-left: auto;
    padding-right: 12px;
}
.menu-right button {
    gap: 5px;
}
.menu-right .caret {
    margin-left: 0;
}
.menu-help {
    display: flex;
    align-items: center;
    gap: 26px;
    height: 30px;
    padding-left: 16px;
    border-left: 1px solid #ddd;
}

/* ribbon */
.ribbon {
    display: flex;
    flex: none;
    height: 95px;
    padding: 2px 0 3px;
    border-bottom: 1px solid #d0d2d0;
}
.group {
    display: flex;
    flex: none;
    padding: 0 6px 0 4px;
    border-right: 1px solid #dcdedf;
}
.group:first-child {
    padding-right: 13px;
}
.group-cut {
    flex: 1 1 0;
    overflow: hidden;
    border-right: none;
}
.tool {
    flex-direction: column;
    justify-content: flex-start;
    gap: 7px;
    padding-top: 7px;
}
.tool span {
    display: flex;
    align-items: center;
}
.stack {
    display: flex;
    flex-direction: column;
    gap: 14px;
    padding: 8px 0 0 6px;
}
.stack button {
    justify-content: flex-start;
    gap: 4px;
}
.stack .caret {
    margin-left: 2px;
}
.off {
    color: #b5b5b5;
}
.off svg {
    stroke: #b5b5b5;
}
.w52 { width: 52px; }
.w60 { width: 60px; }
.w64 { width: 64px; }
.w72 { width: 72px; }
.w80 { width: 80px; }
.w88 { width: 88px; }
.w109 { width: 109px; }
.w118 { width: 118px; }
.ribbon-next {
    width: 18px;
    background-color: #b1b3bc;
}

/* work area */
.work {
    position: relative;
    display: flex;
    flex: 1;
    min-height: 0;
    background-color: #e8e8e8;
}
.rail-left {
    display: flex;
    flex: none;
    flex-direction: column;
    align-items: center;
    gap: 6px;
    width: 62px;
    padding-top: 3px;
}
.rail-left button {
    width: 45px;
    height: 47px;
    border-radius: 6px;
}
.rail-left .on {
    background-color: #b9b9b9;
}
.outline {
    display: flex;
    flex: none;
    flex-direction: column;
    width: 280px;
    padding: 15px 14px 13px 13px;
    background-color: #f4f4f4;
}
.outline-head {
    display: flex;
    align-items: center;
    justify-content: space-between;
    padding: 0 13px 0 14px;
}
.outline h2 {
    margin: 0;
    color: #333;
    font-size: 26px;
    font-weight: normal;
    line-height: 40px;
}
.outline-head svg {
    stroke: #777;
}
.outline-tools {
    display: flex;
    gap: 14px;
    padding: 10px 6px 17px 5px;
}
.outline-tools button {
    width: 20px;
    height: 20px;
    border: 1px solid #888;
    border-radius: 3px;
}
.outline-tools .bot {
    margin-left: auto;
    border: none;
}
.tree {
    flex: 1;
    margin: 0;
    padding: 8px 11px 0 18px;
    border: 1px solid #ddd;
    border-radius: 7px;
    color: #333;
    list-style: none;
}
.tree ul {
    padding: 0 0 0 13px;
    list-style: none;
}
.tree a {
    display: flex;
    align-items: center;
    gap: 8px;
    height: 33px;
    color: inherit;
    text-decoration: none;
    white-space: nowrap;
}
.tree ul a {
    gap: 3px;
    padding-left: 29px;
}
.tree .picked {
    background-color: #c6d5f3;
}
.gutter-left {
    flex: none;
    width: 41px;
    background: linear-gradient(to right, #e8e8e8 50%, #c6c4c4);
}
.gutter-right {
    flex: none;
    width: 37px;
    background: linear-gradient(to right, #c9c9c9, #e6e6e6 75%);
}
.pin {
    position: absolute;
    top: 1px;
    right: 85px;
    width: 50px;
    height: 42px;
    border: 1px solid #999;
    border-left: 3px solid #2f7de0;
    background-color: #fff;
}

/* document */
.paper {
    position: relative;
    flex: 1;
    min-width: 0;
    padding: 22px 213px 0;
    overflow: hidden;
    background-color: #c9e5cf;
    color: #15201c;
    font-family: Lato, "Noto Sans CJK SC", sans-serif;
    font-size: 25px;
    line-height: 39px;
    text-spacing-trim: space-all;
}
.paper p {
    margin: 0;
    white-space: pre;
}
.paper code, .paper p span {
    font-family: inherit;
    font-size: 24px;
}
.paper a {
    color: #1a69ad;
    text-underline-offset: 4px;
}
.paper u {
    text-decoration: underline wavy #e0412e 1px;
    text-underline-offset: 5px;
}
.paper .url {
    font-size: 23px;
}
.paper .in2 { padding-left: 50px; }
.paper .in4 { padding-left: 100px; }
.paper .in6 { padding-left: 150px; }
.figure {
    width: 986px;
    margin: 4px 0 8px;
    padding-bottom: 4px;
    background-color: #fdfdfd;
    color: #555;
    font-family: "Liberation Sans", sans-serif;
    font-size: 17px;
    line-height: 26px;
}
.figure p {
    padding: 5px 2px 15px;
    color: #444;
    font-size: 16px;
}
.figure table {
    width: 984px;
    height: 263px;
    margin-left: 2px;
    border-top: 1px solid #e8e8e8;
    border-bottom: 1px solid #ddd;
    border-collapse: collapse;
    table-layout: fixed;
}
.figure th {
    height: 20px;
    padding: 0;
    color: #333;
    font-size: 12px;
    line-height: 20px;
    text-align: left;
}
.figure td {
    padding: 0 0 0 11px;
    border-left: 1px solid #e2e2e2;
}
.c1 { width: 237px; }
.c2 { width: 123px; }
.c3 { width: 302px; }
.ink {
    position: absolute;
    top: 0;
    left: 0;
    stroke: #fb1a08;
    stroke-width: 7;
    stroke-linecap: round;
    stroke-linejoin: round;
    pointer-events: none;
}
.ink .dots {
    stroke-width: 8;
}
.spot {
    position: absolute;
    top: 22px;
    left: 405px;
    width: 68px;
    height: 68px;
    border-radius: 50%;
    background-color: #faed00;
    mix-blend-mode: multiply;
    pointer-events: none;
}

/* scrollbar and right rail */
.scroll {
    display: flex;
    flex: none;
    flex-direction: column;
    align-items: center;
    gap: 16px;
    width: 20px;
    padding: 8px 0 10px;
    background-color: #dedede;
}
.track {
    flex: 1;
    width: 20px;
    padding-top: 158px;
}
.thumb {
    height: 48px;
    border: 1px solid #aaa;
    border-radius: 10px;
    background-color: #f8f8f8;
}
.rail-right {
    display: flex;
    flex: none;
    flex-direction: column;
    align-items: center;
    width: 63px;
    overflow: hidden;
}
.rail-right .handle {
    margin: 14px 0 17px;
    stroke: #aaa;
}
.rail-right button {
    width: 40px;
    height: 53px;
}
.rail-right .soft svg {
    stroke: #777;
}
.rail-right .rail-more {
    position: absolute;
    right: 0;
    bottom: 0;
    width: 62px;
    height: 17px;
    background-color: #b4b8bc;
}

/* status bar */
.status {
    display: flex;
    flex: none;
    align-items: center;
    height: 43px;
    padding-top: 2px;
}
.cell {
    display: flex;
    align-items: center;
    gap: 5px;
    height: 36px;
    padding: 0 8px 0 13px;
    border-right: 1px solid #e2e4e6;
}
.cell-pos {
    gap: 16px;
    padding-right: 16px;
}
.cell-guard {
    gap: 7px;
    padding-left: 17px;
    border-right: none;
}
.views {
    display: flex;
    gap: 4px;
    margin-left: auto;
    padding-right: 14px;
    border-right: 1px solid #e2e4e6;
}
.views button {
    width: 32px;
    height: 36px;
    border-radius: 5px;
}
.views .on {
    background-color: #c3c3c3;
}
.zoom {
    display: flex;
    align-items: center;
    gap: 14px;
    padding: 0 22px 0 17px;
}
.zoom .percent {
    margin-right: 2px;
}
.zoom .fit {
    margin-left: 4px;
}
.zoom input {
    width: 196px;
    height: 22px;
    margin: 0;
    appearance: none;
    background: linear-gradient(to right, #777 50%, #ccc 50%) center / 100% 2px no-repeat;
}
.zoom input::-webkit-slider-thumb {
    width: 20px;
    height: 20px;
    appearance: none;
    border: 2px solid #666;
    border-radius: 50%;
    background-color: #f8f8f8;
}

/* floating items */
.ime {
    position: absolute;
    top: 820px;
    right: 0;
    display: flex;
    align-items: center;
    gap: 9px;
    width: 286px;
    height: 35px;
    padding-right: 6px;
    border: 1px solid #999;
    border-right: none;
    background-color: #fff;
    color: #1e6fc8;
}
.ime-logo {
    margin-left: -6px;
}
.ime-zh {
    font-size: 20px;
    font-weight: bold;
}
.ime-user {
    position: relative;
}
.ime-user b {
    position: absolute;
    right: -4px;
    bottom: -1px;
    padding: 0 1px;
    border-radius: 3px;
    background-color: #fff;
    font-size: 12px;
    line-height: 11px;
}
.meter {
    position: absolute;
    top: 743px;
    right: 0;
    width: 14px;
    height: 86px;
    padding: 8px 3px 8px 5px;
    border-radius: 4px 0 0 4px;
    background-color: #3c4352;
}
.meter span {
    display: block;
    height: 100%;
    background: repeating-linear-gradient(transparent 0 2px, #3c4352 2px 3px), linear-gradient(#222833 25%, #d3b944 25%, #7fae55 60%, #35a98d 80%);
}
.credit {
    position: absolute;
    right: 14px;
    bottom: 5px;
    color: #8c8c8c;
    font-size: 16px;
}
```
